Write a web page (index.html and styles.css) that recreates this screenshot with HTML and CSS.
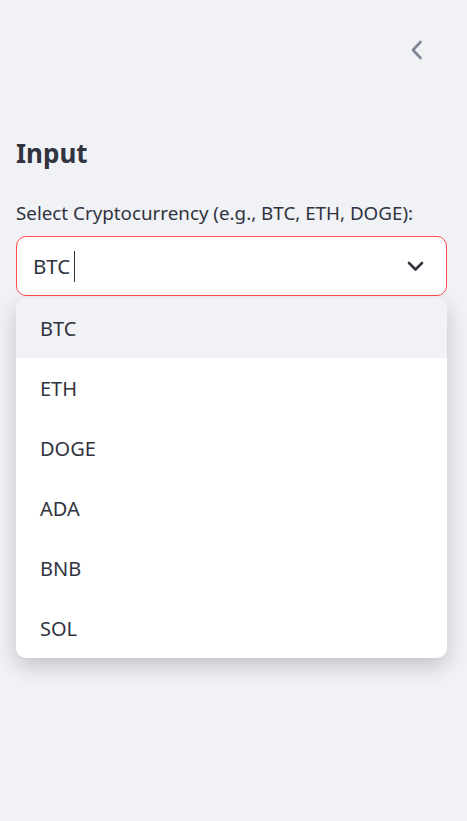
FILE: index.html
```html
<!DOCTYPE html>
<html>
<head>
<meta charset="utf-8">
<link rel="stylesheet" href="styles.css">
</head>
<body>
<div class="sidebar">
  <div class="top">
    <button class="collapse" aria-label="Collapse sidebar">
      <svg width="14" height="20" viewBox="0 0 14 20"><path d="M10.5 2 L3 10 L10.5 18" fill="none" stroke="#808495" stroke-width="2.6" stroke-linecap="round" stroke-linejoin="round"/></svg>
    </button>
  </div>
  <h2 class="heading">Input</h2>
  <label class="label">Select Cryptocurrency (e.g., BTC, ETH, DOGE):</label>
  <div class="selectwrap">
    <div class="select">
      <span class="value">BTC</span><span class="caret"></span>
      <svg class="chev" width="17" height="11" viewBox="0 0 17 11"><path d="M2 2 L8.5 8.5 L15 2" fill="none" stroke="#31333f" stroke-width="2.6" stroke-linecap="round" stroke-linejoin="round"/></svg>
    </div>
    <ul class="menu">
      <li class="opt active">BTC</li>
      <li class="opt">ETH</li>
      <li class="opt">DOGE</li>
      <li class="opt">ADA</li>
      <li class="opt">BNB</li>
      <li class="opt">SOL</li>
    </ul>
  </div>
</div>
</body>
</html>
```
FILE: styles.css
```css
html, body {
  margin: 0;
  padding: 0;
  background: #f0f2f6;
  height: 100%;
}
body {
  font-family: "Noto Sans", sans-serif;
  color: #31333f;
}
.sidebar {
  padding: 0 20px 0 16px;
}
.top {
  display: flex;
  justify-content: flex-end;
  padding-top: 38px;
  height: 64px;
  box-sizing: border-box;
}
.collapse {
  background: none;
  border: none;
  padding: 0;
  margin-right: 23px;
  width: 14px;
  height: 24px;
  display: flex;
  align-items: center;
  justify-content: center;
}
.heading {
  margin: 72px 0 0 0;
  font-size: 26px;
  font-weight: 700;
  line-height: 34px;
}
.label {
  display: block;
  margin-top: 29px;
  font-size: 18.8px;
  line-height: 28px;
}
.selectwrap {
  position: relative;
  margin-top: 9px;
}
.select {
  height: 60px;
  box-sizing: border-box;
  background: #fff;
  border: 1px solid #ff4b4b;
  border-radius: 10px;
  display: flex;
  align-items: center;
  padding: 0 22px 0 16px;
  font-size: 20.5px;
}
.value {
  line-height: 31px;
}
.caret {
  display: inline-block;
  width: 1px;
  height: 31px;
  background: #31333f;
  margin-left: 4px;
}
.chev {
  margin-left: auto;
}
.menu {
  position: absolute;
  left: 0;
  right: 0;
  top: 62px;
  margin: 0;
  padding: 0;
  list-style: none;
  background: #fff;
  border-radius: 10px;
  overflow: hidden;
  box-shadow: 0 8px 22px rgba(0, 0, 0, 0.2);
}
.opt {
  height: 60px;
  display: flex;
  align-items: center;
  padding-left: 24px;
  font-size: 20px;
}
.opt.active {
  background: #f0f2f6;
}
```
